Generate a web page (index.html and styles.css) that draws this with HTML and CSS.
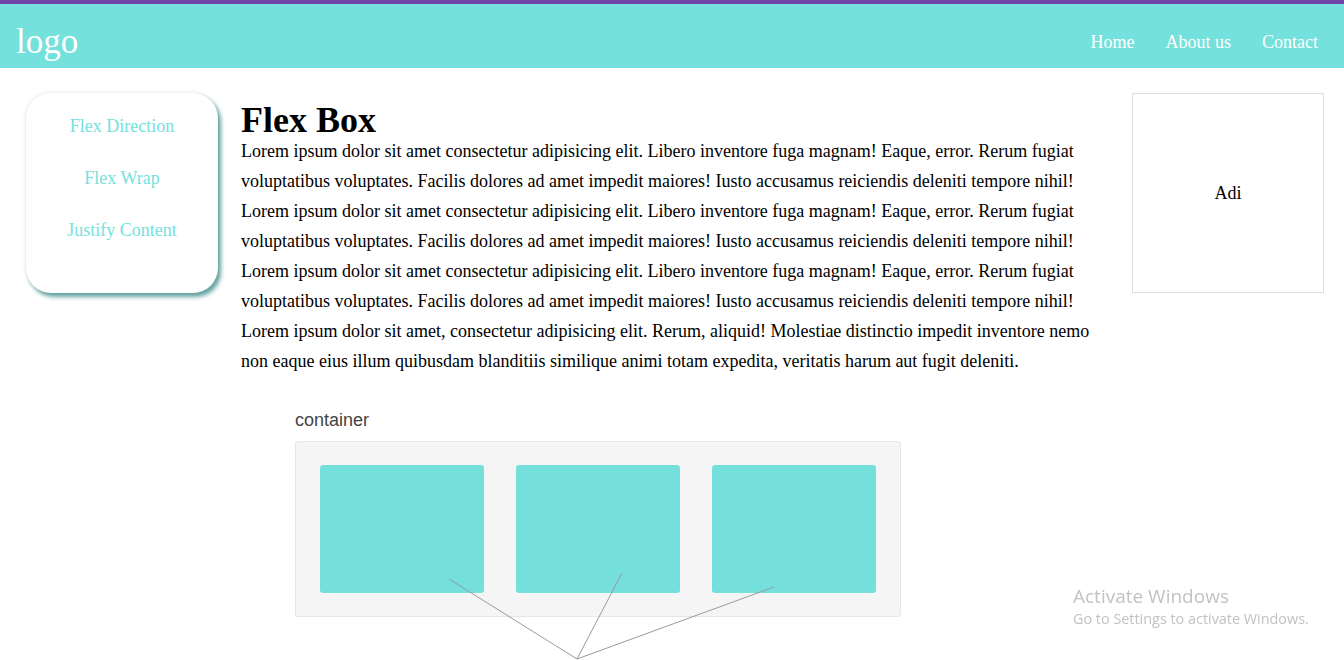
FILE: index.html
```html
<!DOCTYPE html>
<html lang="en">
<head>
<meta charset="utf-8">
<title>Flex Box</title>
<link rel="stylesheet" href="styles.css">
</head>
<body>
<header class="topbar">
  <div class="logo">logo</div>
  <nav class="nav">
    <a href="#">Home</a>
    <a href="#">About us</a>
    <a href="#">Contact</a>
  </nav>
</header>
<div class="layout">
  <aside class="sidebar">
    <a href="#">Flex Direction</a>
    <a href="#">Flex Wrap</a>
    <a href="#">Justify Content</a>
  </aside>
  <main class="main">
    <h1 class="title">Flex Box</h1>
    <p class="text">Lorem ipsum dolor sit amet consectetur adipisicing elit. Libero inventore fuga magnam! Eaque, error. Rerum fugiat voluptatibus voluptates. Facilis dolores ad amet impedit maiores! Iusto accusamus reiciendis deleniti tempore nihil! Lorem ipsum dolor sit amet consectetur adipisicing elit. Libero inventore fuga magnam! Eaque, error. Rerum fugiat voluptatibus voluptates. Facilis dolores ad amet impedit maiores! Iusto accusamus reiciendis deleniti tempore nihil! Lorem ipsum dolor sit amet consectetur adipisicing elit. Libero inventore fuga magnam! Eaque, error. Rerum fugiat voluptatibus voluptates. Facilis dolores ad amet impedit maiores! Iusto accusamus reiciendis deleniti tempore nihil! Lorem ipsum dolor sit amet, consectetur adipisicing elit. Rerum, aliquid! Molestiae distinctio impedit inventore nemo non eaque eius illum quibusdam blanditiis similique animi totam expedita, veritatis harum aut fugit deleniti.</p>
    <figure class="diagram">
      <div class="diagram-label">container</div>
      <div class="flexbox">
        <div class="flex-item"></div>
        <div class="flex-item"></div>
        <div class="flex-item"></div>
      </div>
      <svg class="pointers" width="620" height="260" viewBox="0 0 620 260">
        <line x1="154" y1="169" x2="282" y2="249" />
        <line x1="327" y1="163" x2="282" y2="249" />
        <line x1="479" y1="177" x2="282" y2="249" />
      </svg>
    </figure>
  </main>
  <aside class="ad">Adi</aside>
</div>
<div class="watermark">
  <div class="wm-title">Activate Windows</div>
  <div class="wm-sub">Go to Settings to activate Windows.</div>
</div>
</body>
</html>
```
FILE: styles.css
```css
* { box-sizing: border-box; }

html, body {
  margin: 0;
  padding: 0;
  background: #ffffff;
  font-family: "Liberation Serif", "Times New Roman", serif;
  color: #000;
}

.topbar {
  display: flex;
  justify-content: space-between;
  align-items: flex-start;
  height: 68px;
  background: #75e1dc;
  border-top: 4px solid #7044a6;
  padding: 0 26px 0 16px;
}

.logo {
  font-size: 35px;
  line-height: 35px;
  color: #ffffff;
  margin-top: 20px;
}

.nav {
  display: flex;
  gap: 31px;
  margin-top: 29px;
}

.nav a {
  color: #ffffff;
  text-decoration: none;
  font-size: 18px;
  line-height: 18px;
}

.layout {
  display: flex;
  align-items: flex-start;
  gap: 23px;
  padding: 25px 20px 0 26px;
}

.sidebar {
  flex: 0 0 192px;
  height: 200px;
  border-radius: 25px;
  background: #ffffff;
  box-shadow: 0 0 4px rgba(0, 0, 0, 0.12), 3px 4px 4px #6aa9a8;
  display: flex;
  flex-direction: column;
  align-items: center;
  padding-top: 7px;
}

.sidebar a {
  color: #75e1dc;
  text-decoration: none;
  font-size: 18px;
  line-height: 52px;
}

.main {
  flex: 1 1 auto;
  min-width: 0;
  margin-top: 11px;
}

.title {
  margin: 0;
  font-size: 36px;
  line-height: 32px;
  font-weight: bold;
}

.text {
  margin: 0;
  font-size: 18px;
  line-height: 30px;
}

.diagram {
  position: relative;
  margin: 34px 0 0 54px;
  padding-bottom: 60px;
  width: 606px;
}

.diagram-label {
  font-family: "Liberation Sans", Arial, sans-serif;
  font-size: 18px;
  color: #444444;
  margin-bottom: 10px;
}

.flexbox {
  display: flex;
  gap: 32px;
  padding: 23px 24px 23px 24px;
  background: #f5f5f5;
  border: 1px solid #e6e6e6;
  border-radius: 3px;
}

.flex-item {
  width: 164px;
  height: 128px;
  background: #75e0db;
  border-radius: 3px;
}

.pointers {
  position: absolute;
  left: 0;
  top: 0;
  overflow: visible;
}

.pointers line {
  stroke: #9a9a9a;
  stroke-width: 1;
}

.ad {
  flex: 0 0 192px;
  height: 200px;
  border: 1px solid #dddddd;
  display: flex;
  align-items: center;
  justify-content: center;
  font-size: 18px;
}

.watermark {
  position: fixed;
  left: 1073px;
  top: 585px;
  font-family: "Open Sans", "Noto Sans", sans-serif;
  color: #c2c2c2;
}

.wm-title {
  font-size: 19px;
  line-height: 22px;
}

.wm-sub {
  font-size: 14.4px;
  line-height: 20px;
  margin-top: 2px;
}
```
